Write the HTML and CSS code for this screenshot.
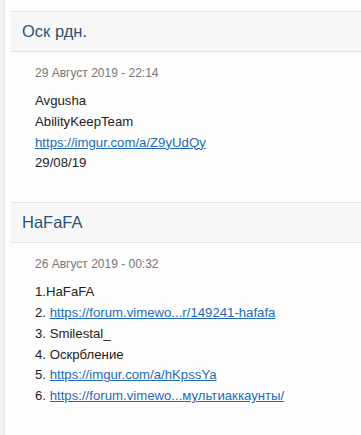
FILE: index.html
```html
<!DOCTYPE html>
<html lang="ru">
<head>
<meta charset="utf-8">
<link rel="stylesheet" href="styles.css">
</head>
<body>
<div class="wrap">
  <div class="post">
    <div class="post-head">Оск рдн.</div>
    <div class="post-body">
      <div class="date">29 Август 2019 - 22:14</div>
      <div class="content">
        Avgusha<br>
        AbilityKeepTeam<br>
        <a href="#">https://imgur.com/a/Z9yUdQy</a><br>
        29/08/19
      </div>
    </div>
  </div>
  <div class="post">
    <div class="post-head">HaFaFA</div>
    <div class="post-body">
      <div class="date">26 Август 2019 - 00:32</div>
      <div class="content">
        1.HaFaFA<br>
        2. <a href="#">https://forum.vimewo...r/149241-hafafa</a><br>
        3. Smilestal_<br>
        4. Оскрбление<br>
        5. <a href="#">https://imgur.com/a/hKpssYa</a><br>
        6. <a href="#">https://forum.vimewo...мультиаккаунты/</a>
      </div>
    </div>
  </div>
</div>
</body>
</html>
```
FILE: styles.css
```css
html, body {
  margin: 0;
  padding: 0;
  background: #f1f1f1;
  font-family: "Liberation Sans", Arial, sans-serif;
}
.wrap {
  margin-left: 4px;
  border-left: 1px solid #e6e6e6;
  background: #fdfdfd;
  padding-top: 11px;
  padding-left: 6px;
  min-height: 440px;
}
.post-head {
  background: #f7f7f7;
  border-top: 1px solid #e3e3e3;
  border-bottom: 1px solid #e3e3e3;
  height: 39px;
  line-height: 39px;
  padding-left: 11px;
  font-size: 16.5px;
  color: #2d5377;
}
.post-body {
  padding: 12px 0 28px 24px;
}
.date {
  font-size: 12px;
  line-height: 18px;
  color: #777;
  margin-bottom: 9px;
}
.content {
  font-size: 13.2px;
  line-height: 20.8px;
  color: #222;
}
.content a {
  color: #1f6bb5;
  text-decoration: underline;
}
```
